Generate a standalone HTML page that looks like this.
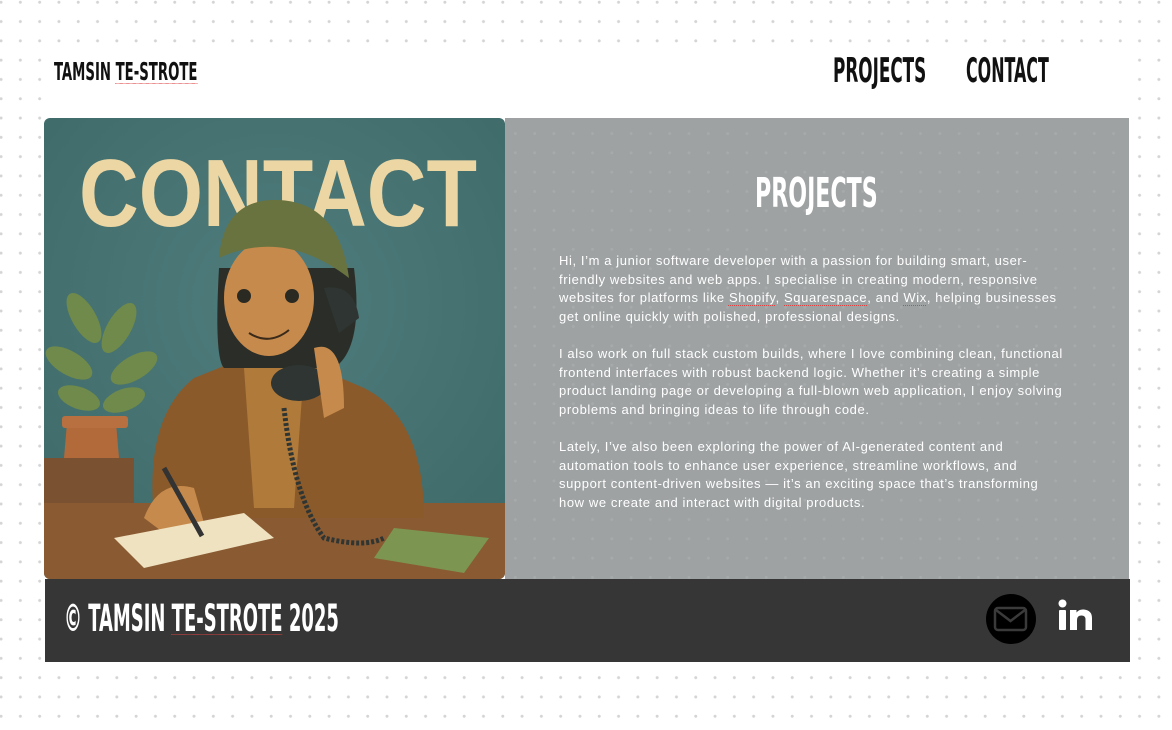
<!DOCTYPE html>
<html><head><meta charset="utf-8">
<style>
*{margin:0;padding:0;box-sizing:border-box}
html,body{width:1172px;height:730px;overflow:hidden}
body{background-color:#fff;background-image:radial-gradient(circle,#d4d4d4 1.3px,transparent 1.7px);background-size:19.3px 19.3px;background-position:-8.6px -7.4px;position:relative;font-family:"Liberation Sans",sans-serif}
.cond{font-family:"Liberation Sans Narrow","DejaVu Sans Condensed","DejaVu Sans",sans-serif;font-weight:bold;line-height:1;white-space:nowrap;transform-origin:left top;position:absolute}
.wrap{position:absolute;left:45px;top:48px;width:1085px;height:614px;background:#fff}
.panel{position:absolute;left:505px;top:118px;width:624px;height:461px;background:#9ea2a3}
.panel .dots{position:absolute;inset:0;background-image:radial-gradient(circle,rgba(255,255,255,.09) 1.3px,transparent 1.7px);background-size:19.3px 19.3px;background-position:-18.6px -13.4px}
.txt{position:absolute;left:559px;top:252px;width:560px;color:#fff;font-size:13px;line-height:18.6px;letter-spacing:0.6px;white-space:nowrap}
.txt p{margin-bottom:18.6px}
.img{position:absolute;left:44px;top:118px;width:461px;height:461px;border-radius:6px;overflow:hidden}
.foot{position:absolute;left:45px;top:579px;width:1085px;height:83px;background:#363636}
u{text-decoration:underline dotted #d44;text-decoration-thickness:1px;text-underline-offset:3px}
</style></head><body>
<div class="wrap"></div>
<div class="cond" style="left:54px;top:59px;font-size:25px;color:#111;transform:scaleX(0.59)">TAMSIN <u>TE-STROTE</u></div>
<div class="cond" style="left:833px;top:54px;font-size:34px;color:#111;transform:scaleX(0.55)">PROJECTS</div>
<div class="cond" style="left:966px;top:54px;font-size:34px;color:#111;transform:scaleX(0.52)">CONTACT</div>
<div class="panel"><div class="dots"></div></div>
<div class="cond" style="left:755px;top:173px;font-size:41px;color:#fff;transform:scaleX(0.6)">PROJECTS</div>
<div class="txt">
<p>Hi, I’m a junior software developer with a passion for building smart, user-<br>friendly websites and web apps. I specialise in creating modern, responsive<br>websites for platforms like <u>Shopify</u>, <u>Squarespace</u>, and <u>Wix</u>, helping businesses<br>get online quickly with polished, professional designs.</p>
<p>I also work on full stack custom builds, where I love combining clean, functional<br>frontend interfaces with robust backend logic. Whether it’s creating a simple<br>product landing page or developing a full-blown web application, I enjoy solving<br>problems and bringing ideas to life through code.</p>
<p>Lately, I’ve also been exploring the power of AI-generated content and<br>automation tools to enhance user experience, streamline workflows, and<br>support content-driven websites — it’s an exciting space that’s transforming<br>how we create and interact with digital products.</p>
</div>
<div class="img">
<svg width="461" height="461" viewBox="0 0 461 461">
<defs><radialGradient id="bg" cx="50%" cy="40%" r="70%"><stop offset="0" stop-color="#4f7c7c"/><stop offset="1" stop-color="#3f6a6a"/></radialGradient></defs>
<rect width="461" height="461" fill="url(#bg)"/>
<text x="35" y="108" textLength="398" lengthAdjust="spacingAndGlyphs" font-family="Liberation Sans,sans-serif" font-weight="bold" font-size="96" fill="#ecd6a3">CONTACT</text>
<rect x="0" y="340" width="90" height="45" fill="#7a5232"/>
<rect x="0" y="385" width="461" height="76" fill="#8a5a32"/>
<path d="M20 340 L75 340 L72 305 L23 305Z" fill="#b36a3a"/>
<rect x="18" y="298" width="66" height="12" rx="3" fill="#b87040"/>
<g fill="#6f8a4a"><ellipse cx="40" cy="200" rx="12" ry="28" transform="rotate(-30 40 200)"/><ellipse cx="75" cy="210" rx="12" ry="28" transform="rotate(30 75 210)"/><ellipse cx="25" cy="245" rx="12" ry="26" transform="rotate(-60 25 245)"/><ellipse cx="90" cy="250" rx="12" ry="26" transform="rotate(60 90 250)"/><ellipse cx="35" cy="280" rx="11" ry="22" transform="rotate(-70 35 280)"/><ellipse cx="80" cy="282" rx="11" ry="22" transform="rotate(70 80 282)"/></g>
<path d="M110 400 Q100 300 150 260 L200 240 L250 240 L320 270 Q380 300 380 400Z" fill="#8a5a2a"/>
<path d="M200 250 L260 250 L250 390 L210 390Z" fill="#b07a3a"/>
<path d="M175 150 Q170 240 180 250 L290 250 Q320 230 310 150Z" fill="#2b2e28"/>
<ellipse cx="225" cy="180" rx="45" ry="58" fill="#c68a4c"/>
<path d="M175 140 Q180 80 235 82 Q295 85 305 160 Q240 110 175 140Z" fill="#69733f"/>
<circle cx="200" cy="178" r="7" fill="#2a2a22"/><circle cx="248" cy="178" r="7" fill="#2a2a22"/>
<path d="M205 215 Q225 228 245 212" stroke="#3a2a1a" stroke-width="2" fill="none"/>
<path d="M280 170 Q310 165 315 200 L295 215Z" fill="#2f3532"/>
<ellipse cx="255" cy="265" rx="28" ry="18" fill="#2f3532"/>
<path d="M270 230 Q300 220 300 290 L280 300Z" fill="#c68a4c"/>
<path d="M240 290 Q250 380 280 420 Q320 430 340 420" stroke="#2f3532" stroke-width="5" fill="none" stroke-dasharray="3 2"/>
<path d="M100 400 Q115 360 150 370 L160 405 L120 415Z" fill="#c68a4c"/>
<path d="M70 420 L200 395 L230 420 L100 450Z" fill="#efe2c0"/>
<path d="M350 410 L445 420 L420 455 L330 440Z" fill="#7c9550"/>
<path d="M120 350 L158 418" stroke="#333" stroke-width="5"/>
</svg>
</div>
<div class="foot"></div>
<div class="cond" style="left:64px;top:600px;font-size:37px;color:#fff;transform:scaleX(0.54)">© TAMSIN <u>TE-STROTE</u> 2025</div>
<svg style="position:absolute;left:985px;top:593px" width="52" height="52" viewBox="0 0 52 52">
<circle cx="26" cy="26" r="25" fill="#000"/>
<rect x="10" y="15" width="31" height="22" rx="3" fill="none" stroke="#3a3a3a" stroke-width="2.5"/>
<path d="M11 17 L25.5 28 L40 17" fill="none" stroke="#3a3a3a" stroke-width="2.5"/>
</svg>
<svg style="position:absolute;left:1058px;top:599px" width="36" height="34" viewBox="0 0 36 34">
<circle cx="4.5" cy="4.5" r="4" fill="#fff"/>
<rect x="1" y="11" width="7" height="20" rx="1" fill="#fff"/>
<path d="M12 11 H18.5 V13.5 Q21 10 26 10.5 Q34 11.5 34 19 V31 H27.5 V20.5 Q27.5 16.5 23.5 16.5 Q19 16.5 19 21 V31 H12Z" fill="#fff"/>
</svg>
</body></html>
